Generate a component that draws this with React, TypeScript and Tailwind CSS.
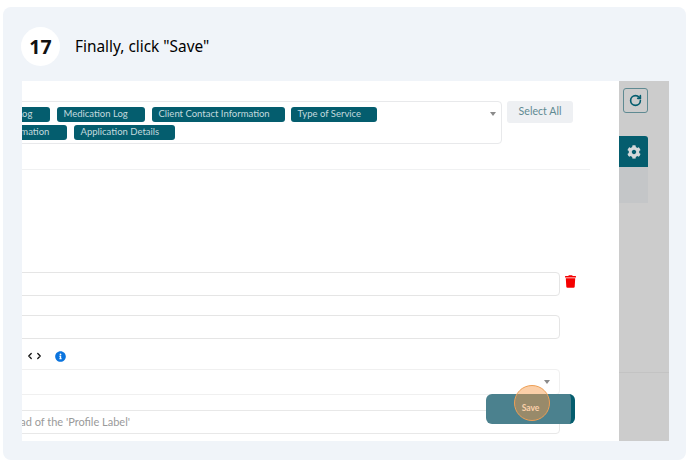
import { ChevronLeft, ChevronRight, RotateCw } from "lucide-react";
import { FaCog, FaInfoCircle, FaTrash } from "react-icons/fa";

const Tag = ({ label, className = "" }: { label: string; className?: string }) => (
  <span
    className={`flex h-[14.5px] shrink-0 items-center whitespace-nowrap rounded-[3px] bg-[#045d6e] pl-[6.5px] text-[9.5px] text-[#c3dade] ${className}`}
  >
    {label}
  </span>
);

const Caret = () => (
  <span className="h-0 w-0 border-x-[3.5px] border-t-[4px] border-x-transparent border-t-[#8a8a8a]" />
);

export default function App() {
  return (
    <div className="h-[464px] w-[688px] overflow-hidden bg-white pl-[3px] pt-[7px] font-['Lato',sans-serif]">
      <div className="h-[453px] w-[683px] rounded-lg bg-[#f0f4f9] pl-[19px] pt-[20px]">
        <div className="-ml-[1px] flex h-[54px] items-start">
          <div className="flex h-[39px] w-[39px] items-center justify-center rounded-full bg-white font-['Noto_Sans',sans-serif] text-[19.5px] font-bold text-[#111]">
            17
          </div>
          <p className="ml-[15px] mt-[9px] font-['Noto_Sans',sans-serif] text-[15.4px] leading-[21px] text-black">
            Finally, click "Save"
          </p>
        </div>

        <div className="relative flex h-[360px] w-[647px]">
          <main className="w-[597px] overflow-hidden bg-white pt-[20px]">
            <div className="flex items-start">
              <div className="relative -ml-[20px] h-[43px] w-[500px] rounded border border-[#e8e9eb] pt-[5px]">
                <div className="flex gap-[7px]">
                  <Tag label="Log" className="ml-[8px] w-[39px]" />
                  <Tag label="Medication Log" className="w-[88px]" />
                  <Tag label="Client Contact Information" className="-mr-px w-[133px]" />
                  <Tag label="Type of Service" className="w-[86px]" />
                </div>
                <div className="mt-[3.5px] flex gap-[7px]">
                  <Tag label="Information" className="-ml-[9px] w-[73px]" />
                  <Tag label="Application Details" className="w-[101px]" />
                </div>
                <span className="absolute right-[5px] top-[10px] flex">
                  <Caret />
                </span>
              </div>
              <button
                type="button"
                className="ml-[5px] h-[22px] w-[66px] rounded-[3px] bg-[#eef0f3] text-[10.6px] text-[#5f8a92]"
              >
                Select All
              </button>
            </div>

            <hr className="mt-[25px] w-[568px] border-[#f0f1f2]" />

            <div className="mt-[102px] flex items-start">
              <div className="-ml-[20px] h-[24px] w-[558px] rounded border border-[#e5e5e5]" />
              <FaTrash className="ml-[5px] mt-[3px] h-[13px] w-[11px] text-[#f50000]" />
            </div>
            <div className="-ml-[20px] mt-[19px] h-[24px] w-[558px] rounded border border-[#e5e5e5]" />

            <div className="ml-[4px] mt-[11px] flex h-[12px] items-center">
              <ChevronLeft className="-ml-[1px] h-[14px] w-[10px]" strokeWidth={3} color="#111" />
              <ChevronRight className="-ml-[1px] h-[14px] w-[10px]" strokeWidth={3} color="#111" />
              <FaInfoCircle className="ml-[11px] h-[11px] w-[11px] text-[#0b74de]" />
            </div>

            <div className="-ml-[20px] mt-[7px] flex h-[26px] w-[558px] items-start justify-end rounded border border-[#f0f0f0] pr-[9px] pt-[10px]">
              <Caret />
            </div>
            <div className="-ml-[20px] mt-[15px] flex h-[24px] w-[558px] items-center justify-end rounded border border-[#e8e8e8]">
              <span className="mr-[429px] whitespace-nowrap text-[11px] text-[#9a9a9a]">
                Instead of the 'Profile Label'
              </span>
            </div>
          </main>

          <aside className="w-[50px] bg-[#cccccc] pt-[7px]">
            <div className="ml-[4px] flex h-[25px] w-[25px] items-center justify-center rounded-[3px] border border-[#5f8a92]">
              <RotateCw className="h-[13px] w-[13px] text-[#045d6e]" strokeWidth={3} />
            </div>
            <div className="mt-[23px] flex h-[31px] w-[29px] items-center justify-center rounded-tr-[3px] bg-[#045d6e]">
              <FaCog className="h-[14px] w-[14px] text-[#d4d8da]" />
            </div>
            <div className="h-[36px] w-[29px] bg-[#c4c6c8]" />
            <hr className="mt-[169px] border-[#c3c3c3]" />
          </aside>

          <button
            type="button"
            className="absolute left-[464px] top-[313px] h-[30px] w-[89px] rounded-[6px] border-r-[4px] border-[#045d6e] bg-[#4b818e] pb-[1px] pl-[4px] text-[8.5px] font-bold text-white"
          >
            Save
          </button>
          <span className="absolute left-[492px] top-[304px] h-[36px] w-[36px] rounded-full border-[1.5px] border-[#ee9f55] bg-[#f7953f]/45" />
        </div>
      </div>
    </div>
  );
}
